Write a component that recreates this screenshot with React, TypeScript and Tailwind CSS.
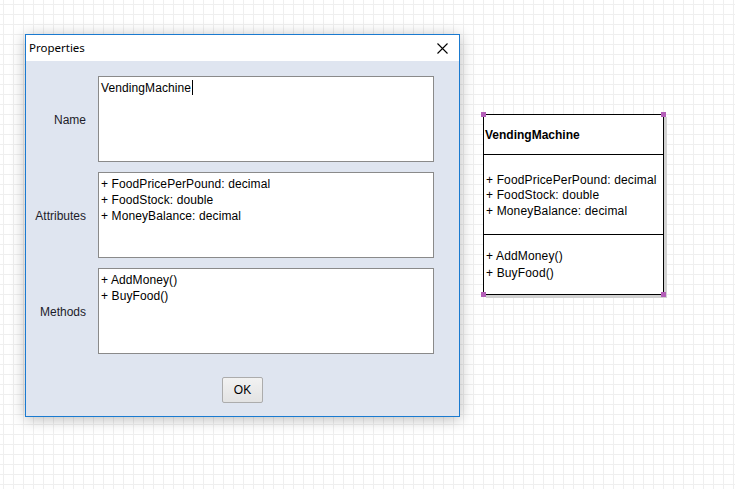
import { ReactNode } from 'react'

const attributes = ['+ FoodPricePerPound: decimal', '+ FoodStock: double', '+ MoneyBalance: decimal']
const methods = ['+ AddMoney()', '+ BuyFood()']

function Field({ label, children }: { label: string; children: ReactNode }) {
  return (
    <>
      <div className="flex items-center justify-end pt-px text-[12px] text-[#1c1c2a]">{label}</div>
      <div className="h-[86px] border border-[#8a8a8a] bg-white px-[2px] pt-[3px] text-[12px] leading-[16px] tracking-[0.1px] text-black">
        {children}
      </div>
    </>
  )
}

function PropertiesDialog() {
  return (
    <div className="absolute left-[25px] top-[34px] w-[435px] h-[383px] border border-[#1a7ad0] bg-[#dfe5f0] shadow-[0_2px_14px_rgba(0,0,0,0.28)] flex flex-col">
      {/* title bar */}
      <div className="h-[26px] bg-white flex items-center justify-between pl-[3px] pr-[11px]">
        <span className="font-['Noto_Sans',sans-serif] text-[11.5px] text-black">Properties</span>
        <svg width="11" height="11" viewBox="0 0 11 11" className="text-black">
          <path d="M0.5 0.5 L10.5 10.5 M10.5 0.5 L0.5 10.5" stroke="currentColor" strokeWidth="1.1" fill="none" />
        </svg>
      </div>

      <div className="grid grid-cols-[60px_336px] gap-x-[12px] gap-y-[10px] pt-[15px]">
        <Field label="Name">
          <span>VendingMachine</span>
          <span className="inline-block w-px h-[15px] bg-black align-[-3px] ml-px" />
        </Field>
        <Field label="Attributes">
          {attributes.map((a) => (
            <div key={a}>{a}</div>
          ))}
        </Field>
        <Field label="Methods">
          {methods.map((m) => (
            <div key={m}>{m}</div>
          ))}
        </Field>
      </div>

      <div className="flex justify-center pt-[23px]">
        <button className="w-[41px] h-[26px] rounded-[2px] border border-[#acacac] bg-[linear-gradient(to_bottom,#f2f2f2,#e3e3e3)] text-[12px] text-black">
          OK
        </button>
      </div>
    </div>
  )
}

function Handle({ className }: { className: string }) {
  return <div className={`absolute w-[5px] h-[5px] bg-[#b45fb8] ${className}`} />
}

function ClassNode() {
  return (
    <div className="absolute left-[483px] top-[114px] w-[181px] h-[181px] border border-black bg-white shadow-[3px_3px_0_#d2d2d2] flex flex-col text-[12px] tracking-[0.15px] text-black">
      <div className="h-[40px] flex items-center pl-[1px] font-bold tracking-normal border-b border-black">VendingMachine</div>
      <div className="h-[80px] flex flex-col justify-center pl-[2px] pt-[3px] leading-[15.5px] border-b border-black">
        {attributes.map((a) => (
          <div key={a}>{a}</div>
        ))}
      </div>
      <div className="flex-1 flex flex-col justify-center pl-[2px] leading-[16.5px]">
        {methods.map((m) => (
          <div key={m}>{m}</div>
        ))}
      </div>
      <Handle className="-left-[3px] -top-[3px]" />
      <Handle className="-right-[3px] -top-[3px]" />
      <Handle className="-left-[3px] -bottom-[3px]" />
      <Handle className="-right-[3px] -bottom-[3px]" />
    </div>
  )
}

export default function App() {
  return (
    <div className="relative w-[735px] h-[489px] overflow-hidden bg-white font-['Liberation_Sans',Arial,sans-serif] bg-[linear-gradient(to_right,#efefef_1px,transparent_1px),linear-gradient(to_bottom,#efefef_1px,transparent_1px)] bg-[size:10px_10px] bg-[position:3px_4px]">
      <ClassNode />
      <PropertiesDialog />
    </div>
  )
}
